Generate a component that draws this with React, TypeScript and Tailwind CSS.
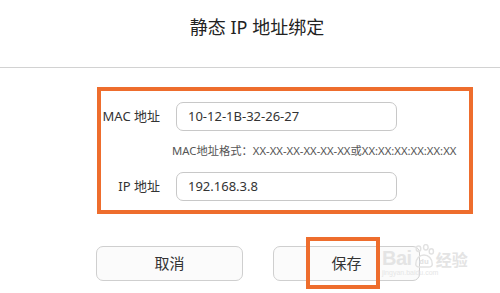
import React from "react";

const font = { fontFamily: '"Noto Sans", "Noto Sans CJK SC", sans-serif' };

function Field({ label, value }: { label: string; value: string }) {
  return (
    <div className="flex items-center">
      <div className="w-[59px] text-right text-[13px] text-[#333]">{label}</div>
      <div className="ml-[16px] flex h-[29px] w-[221px] items-center rounded-[7px] border border-[#c8c8c8] bg-white pl-[11px] text-[13px] text-[#333]">
        {value}
      </div>
    </div>
  );
}

function Watermark() {
  return (
    <div className="pointer-events-none absolute left-[382px] top-[244px] flex flex-col items-start text-[#e4e4e4]">
      <div className="flex items-end leading-none">
        <span className="text-[20px] font-bold tracking-tight" style={{ fontFamily: '"Liberation Sans", sans-serif' }}>
          Bai
        </span>
        <svg width="22" height="24" viewBox="0 0 24 26" className="mx-[1px]">
          <g fill="none" stroke="#e2e2e2" strokeWidth="1.6">
            <ellipse cx="6" cy="5" rx="2.5" ry="3" />
            <ellipse cx="14" cy="3.5" rx="2.5" ry="3" />
            <ellipse cx="20" cy="8" rx="2.3" ry="2.8" />
            <path d="M3 22c0-6 4-10 9-10s9 4 9 10c0 2-2 3-4 3H7c-2 0-4-1-4-3z" />
          </g>
          <text x="12" y="22" fontSize="8" textAnchor="middle" fill="#e2e2e2" fontWeight="bold">du</text>
        </svg>
        <span className="text-[16px] font-bold">经验</span>
      </div>
      <div className="mt-[1px] text-[7px] leading-none text-[#e6e6e6]" style={{ fontFamily: '"Liberation Sans", sans-serif' }}>
        jingyan.baidu.com
      </div>
    </div>
  );
}

export default function App() {
  return (
    <div className="relative h-[293px] w-[500px] overflow-hidden bg-white" style={font}>
      {/* Header */}
      <div className="flex h-[68px] items-center justify-center border-b border-[#d2d2d2] pb-[12px] pl-[14px] text-[18px] text-[#222]">
        静态 IP 地址绑定
      </div>

      {/* Form, highlighted */}
      <div className="ml-[97px] mt-[19px] h-[127px] w-[376px] border-[4px] border-[#ee6d2d] pt-[11px]">
        <Field label="MAC 地址" value="10-12-1B-32-26-27" />
        <div className="ml-[71px] flex h-[41px] items-center text-[11.3px] text-[#555]">
          MAC地址格式：XX-XX-XX-XX-XX-XX或XX:XX:XX:XX:XX:XX
        </div>
        <Field label="IP 地址" value="192.168.3.8" />
      </div>

      {/* Buttons */}
      <div className="ml-[96px] mt-[32px] flex gap-[30px]">
        <button className="h-[35px] w-[147px] rounded-[7px] border border-[#cfcfcf] bg-[#fbfbfb] text-[15px] text-[#333]">
          取消
        </button>
        <div className="relative">
          <button className="h-[35px] w-[147px] rounded-[7px] border border-[#cfcfcf] bg-[#fbfbfb] text-[15px] text-[#333]">
            保存
          </button>
          <div className="pointer-events-none absolute left-[33px] top-[-9px] h-[52px] w-[74px] border-[4px] border-[#ee6d2d]" />
        </div>
      </div>

      <Watermark />
    </div>
  );
}
